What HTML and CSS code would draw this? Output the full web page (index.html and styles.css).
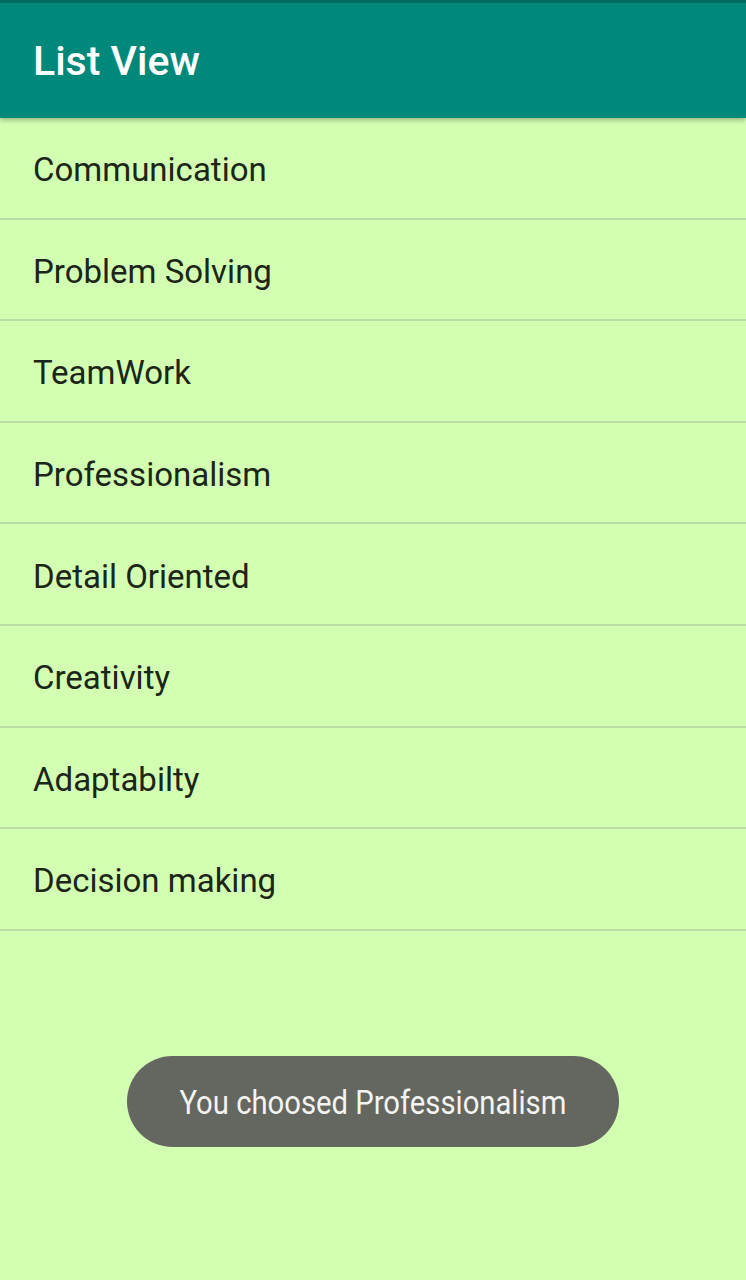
FILE: index.html
```html
<!DOCTYPE html>
<html>
<head>
<meta charset="utf-8">
<link rel="stylesheet" href="styles.css">
</head>
<body>
<div class="screen">
  <header class="appbar">
    <h1 class="title">List View</h1>
  </header>
  <ul class="list">
    <li class="item">Communication</li>
    <li class="item">Problem Solving</li>
    <li class="item">TeamWork</li>
    <li class="item">Professionalism</li>
    <li class="item">Detail Oriented</li>
    <li class="item">Creativity</li>
    <li class="item">Adaptabilty</li>
    <li class="item">Decision making</li>
  </ul>
  <div class="toast"><span class="toast-text">You choosed Professionalism</span></div>
</div>
</body>
</html>
```
FILE: styles.css
```css
html, body {
  margin: 0;
  padding: 0;
}
body {
  background: #d3ffb3;
  font-family: Roboto, "Noto Sans", sans-serif;
}
.screen {
  position: relative;
  width: 746px;
  height: 1280px;
  overflow: hidden;
  background: #d3ffb3;
}
.appbar {
  height: 115px;
  background: #00897b;
  border-top: 3px solid #00695c;
  box-shadow: 0 2px 5px rgba(0,0,0,0.3);
  display: flex;
  align-items: center;
  padding-left: 33px;
  position: relative;
  z-index: 1;
}
.title {
  margin: 0;
  color: #ffffff;
  font-size: 41px;
  font-weight: 500;
  margin-top: 0;
}
.list {
  list-style: none;
  margin: 0;
  padding: 0;
}
.item {
  box-sizing: border-box;
  height: 101.6px;
  padding-top: 4px;
  border-bottom: 2px solid #bcdca6;
  display: flex;
  align-items: center;
  padding-left: 33px;
  font-size: 33px;
  color: #1b2618;
}
.toast {
  position: absolute;
  left: 127px;
  top: 1056px;
  width: 492px;
  height: 91px;
  border-radius: 46px;
  background: #64675f;
  display: flex;
  align-items: center;
  justify-content: center;
}
.toast-text {
  color: #f4f4f2;
  font-size: 34px;
  display: inline-block;
  transform: scaleX(0.86);
  white-space: nowrap;
}
```
